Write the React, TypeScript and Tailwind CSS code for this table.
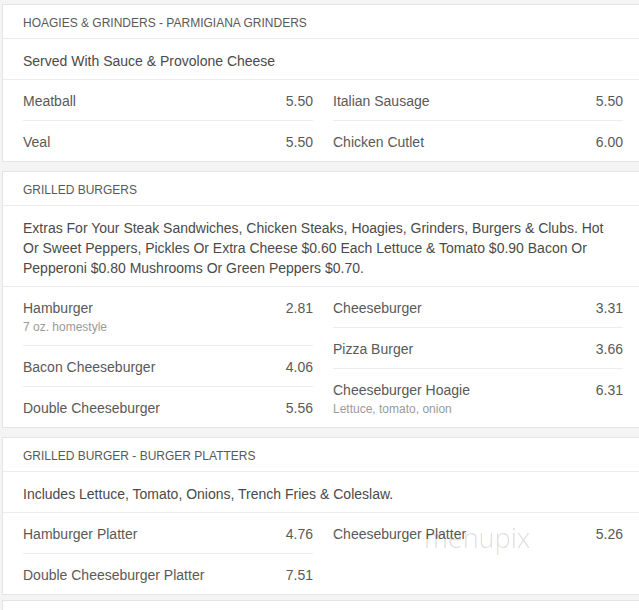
import React from 'react';

type Item = { name: string; price: string; note?: string };
type Section = { title: string; desc: string; left: Item[]; right: Item[]; mark?: boolean };

const sections: Section[] = [
  {
    title: 'Hoagies & Grinders - Parmigiana Grinders',
    desc: 'Served With Sauce & Provolone Cheese',
    left: [
      { name: 'Meatball', price: '5.50' },
      { name: 'Veal', price: '5.50' },
    ],
    right: [
      { name: 'Italian Sausage', price: '5.50' },
      { name: 'Chicken Cutlet', price: '6.00' },
    ],
  },
  {
    title: 'Grilled Burgers',
    desc: 'Extras For Your Steak Sandwiches, Chicken Steaks, Hoagies, Grinders, Burgers & Clubs. Hot Or Sweet Peppers, Pickles Or Extra Cheese $0.60 Each Lettuce & Tomato $0.90 Bacon Or Pepperoni $0.80 Mushrooms Or Green Peppers $0.70.',
    left: [
      { name: 'Hamburger', price: '2.81', note: '7 oz. homestyle' },
      { name: 'Bacon Cheeseburger', price: '4.06' },
      { name: 'Double Cheeseburger', price: '5.56' },
    ],
    right: [
      { name: 'Cheeseburger', price: '3.31' },
      { name: 'Pizza Burger', price: '3.66' },
      { name: 'Cheeseburger Hoagie', price: '6.31', note: 'Lettuce, tomato, onion' },
    ],
  },
  {
    title: 'Grilled Burger - Burger Platters',
    desc: 'Includes Lettuce, Tomato, Onions, Trench Fries & Coleslaw.',
    left: [
      { name: 'Hamburger Platter', price: '4.76' },
      { name: 'Double Cheeseburger Platter', price: '7.51' },
    ],
    right: [{ name: 'Cheeseburger Platter', price: '5.26' }],
    mark: true,
  },
];

function Row({ item }: { item: Item }) {
  return (
    <div className="pt-[11px] pb-[9px]">
      <div className="flex justify-between leading-[20px] text-[14px] text-[#595959]">
        <span>{item.name}</span>
        <span>{item.price}</span>
      </div>
      {item.note && <div className="text-[12px] leading-[18px] text-[#9a9a9a]">{item.note}</div>}
    </div>
  );
}

function Column({ items }: { items: Item[] }) {
  return (
    <div className="divide-y divide-[#ececec]">
      {items.map(i => (
        <Row key={i.name} item={i} />
      ))}
    </div>
  );
}

function Card({ s }: { s: Section }) {
  return (
    <div className="relative bg-white border border-[#e4e4e4]">
      <div className="h-[34px] flex items-center pt-[2px] px-5 border-b border-[#ececec] text-[12px] uppercase text-[#595959]">
        {s.title}
      </div>
      <div className="pl-5 pr-8 pt-[12px] pb-[8px] leading-[20px] text-[14px] text-[#4a4a4a] border-b border-[#ececec]">
        {s.desc}
      </div>
      <div className="grid grid-cols-2 gap-5 px-5">
        <Column items={s.left} />
        <Column items={s.right} />
      </div>
      {s.mark && (
        <div className="pointer-events-none absolute left-[421px] top-[83px] text-[27px] leading-[34px] font-light text-black/15 font-['Open_Sans',sans-serif]">
          menupix
        </div>
      )}
    </div>
  );
}

export default function App() {
  return (
    <div className="w-[639px] h-[610px] overflow-hidden bg-[#f4f4f5] pt-[4px] pl-[2px] font-['Liberation_Sans',Arial,sans-serif]">
      <div className="w-[642px] flex flex-col gap-[9px]">
        {sections.map(s => (
          <Card key={s.title} s={s} />
        ))}
        <div className="bg-white border border-[#e4e4e4] h-[40px] -mt-[4px]" />
      </div>
    </div>
  );
}
